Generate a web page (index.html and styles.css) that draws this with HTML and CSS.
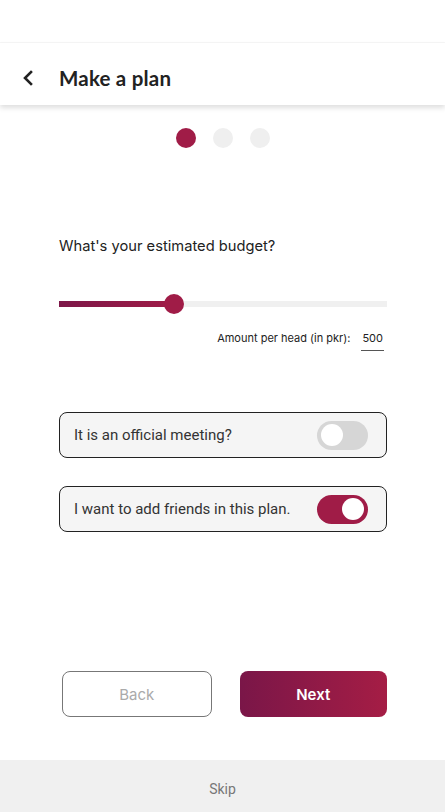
FILE: index.html
```html
<!DOCTYPE html>
<html lang="en">
<head>
    <meta charset="UTF-8">
    <meta name="viewport" content="width=device-width, initial-scale=1.0">
    <title>Make a plan</title>
    <link rel="stylesheet" href="styles.css">
</head>
<body>
    <div class="status"></div>

    <header class="topbar">
        <button class="back-btn" aria-label="Back">
            <svg width="14" height="16" viewBox="0 0 14 16"><path d="M9 2 L3 8 L9 14" fill="none" stroke="#222" stroke-width="2.6" stroke-linecap="square"/></svg>
        </button>
        <h1>Make a plan</h1>
    </header>

    <div class="steps">
        <span class="dot active"></span>
        <span class="dot"></span>
        <span class="dot"></span>
    </div>

    <main class="content">
        <p class="question">What's your estimated budget?</p>

        <div class="slider">
            <div class="track"></div>
            <div class="fill" style="width: 115px;"></div>
            <div class="thumb" style="left: 115px;"></div>
        </div>

        <div class="amount">
            <span>Amount per head (in pkr):</span>
            <span class="amount-value">500</span>
        </div>

        <div class="options">
            <div class="option">
                <span>It is an official meeting?</span>
                <span class="switch"><span class="knob"></span></span>
            </div>

            <div class="option">
                <span>I want to add friends in this plan.</span>
                <span class="switch on"><span class="knob"></span></span>
            </div>
        </div>
    </main>

    <div class="actions">
        <button class="btn btn-back">Back</button>
        <button class="btn btn-next">Next</button>
    </div>

    <footer class="skip">Skip</footer>
</body>
</html>
```

FILE: styles.css
```css
body {
    margin: 0;
    padding: 0;
    background: #fff;
    font-family: Roboto, "Noto Sans", sans-serif;
    width: 445px;
    height: 812px;
    display: flex;
    flex-direction: column;
    overflow: hidden;
}
.status {
    height: 42px;
    border-bottom: 1px solid #f6f6f6;
}
.topbar {
    height: 62px;
    box-sizing: border-box;
    padding-top: 8px;
    display: flex;
    align-items: center;
    background: #fff;
    box-shadow: 0 3px 5px rgba(0,0,0,0.13);
    position: relative;
    z-index: 1;
}
.back-btn {
    background: none;
    border: none;
    padding: 0;
    margin-left: 21px;
    width: 16px;
    height: 18px;
    display: flex;
    align-items: center;
    justify-content: center;
}
.topbar h1 {
    margin: 0 0 0 22px;
    font-family: Lato, sans-serif;
    font-size: 20.5px;
    font-weight: 700;
    color: #222;
    letter-spacing: 0.2px;
}
.steps {
    display: flex;
    justify-content: center;
    gap: 17px;
    margin-top: 23px;
}
.dot {
    width: 20px;
    height: 20px;
    border-radius: 50%;
    background: #efefef;
}
.dot.active {
    background: #a01c47;
}
.content {
    padding: 0 58px 0 59px;
    flex: 1;
}
.question {
    margin: 89px 0 0;
    font-family: Inter, sans-serif;
    font-size: 14.7px;
    color: #222;
}
.slider {
    position: relative;
    height: 20px;
    margin-top: 39px;
}
.track {
    position: absolute;
    left: 0;
    right: 0;
    top: 7px;
    height: 6px;
    background: #f0f0f0;
}
.fill {
    position: absolute;
    left: 0;
    top: 7px;
    height: 6px;
    background: linear-gradient(to right, #7d1748, #a01c47);
}
.thumb {
    position: absolute;
    top: 0;
    width: 20px;
    height: 20px;
    margin-left: -10px;
    border-radius: 50%;
    background: #a01c47;
}
.amount {
    display: flex;
    justify-content: flex-end;
    align-items: baseline;
    gap: 11px;
    margin-top: 17px;
    padding-right: 3px;
    font-family: Inter, sans-serif;
    font-size: 11px;
    color: #222;
}
.amount-value {
    border-bottom: 1px solid #555;
    padding: 0 1px 5px;
}
.options {
    display: flex;
    flex-direction: column;
    gap: 28px;
    margin-top: 61px;
}
.option {
    display: flex;
    align-items: center;
    justify-content: space-between;
    height: 44px;
    padding: 0 18px 0 14px;
    border: 1px solid #222;
    border-radius: 8px;
    background: #f5f5f5;
    font-size: 15px;
    color: #333;
}
.switch {
    width: 51px;
    height: 29px;
    border-radius: 15px;
    background: #d6d6d6;
    display: flex;
    align-items: center;
    padding: 0 4px;
    box-sizing: border-box;
}
.switch .knob {
    width: 22px;
    height: 22px;
    border-radius: 50%;
    background: #fff;
}
.switch.on {
    background: #a01c47;
    justify-content: flex-end;
}
.actions {
    display: flex;
    gap: 28px;
    padding: 0 58px 0 62px;
    margin-bottom: 43px;
}
.btn {
    flex: 1;
    height: 46px;
    border-radius: 8px;
    font-family: Inter, sans-serif;
    font-size: 15px;
}
.btn-back {
    background: #fff;
    border: 1px solid #777;
    color: #aaa;
}
.btn-next {
    border: none;
    color: #fff;
    font-weight: 600;
    background: linear-gradient(to right, #7a1648, #a51d45);
}
.skip {
    height: 52px;
    box-sizing: border-box;
    padding-top: 5px;
    background: #f0f0f0;
    color: #777;
    font-size: 14px;
    display: flex;
    align-items: center;
    justify-content: center;
}
```
